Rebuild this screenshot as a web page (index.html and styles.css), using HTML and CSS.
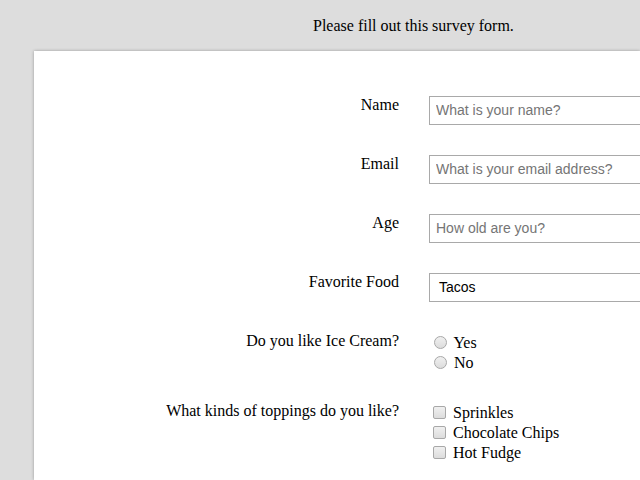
FILE: index.html
```html
<!DOCTYPE html>
<html>
<head>
<meta charset="utf-8">
<link rel="stylesheet" href="styles.css">
</head>
<body>
<header class="intro">Please fill out this survey form.</header>
<main class="panel">
  <form class="survey">
    <div class="row">
      <label class="label" for="name">Name</label>
      <div class="field"><input class="text" id="name" type="text" placeholder="What is your name?"></div>
    </div>
    <div class="row">
      <label class="label" for="email">Email</label>
      <div class="field"><input class="text" id="email" type="text" placeholder="What is your email address?"></div>
    </div>
    <div class="row">
      <label class="label" for="age">Age</label>
      <div class="field"><input class="text" id="age" type="text" placeholder="How old are you?"></div>
    </div>
    <div class="row">
      <label class="label" for="food">Favorite Food</label>
      <div class="field"><div class="select" id="food">Tacos</div></div>
    </div>
    <div class="row">
      <div class="label">Do you like Ice Cream?</div>
      <div class="field choices">
        <label class="choice"><input class="radio" type="radio" name="ice"> Yes</label>
        <label class="choice"><input class="radio" type="radio" name="ice"> No</label>
      </div>
    </div>
    <div class="row">
      <div class="label">What kinds of toppings do you like?</div>
      <div class="field choices">
        <label class="choice"><input class="check" type="checkbox"> Sprinkles</label>
        <label class="choice"><input class="check" type="checkbox"> Chocolate Chips</label>
        <label class="choice"><input class="check" type="checkbox"> Hot Fudge</label>
      </div>
    </div>
  </form>
</main>
</body>
</html>
```

FILE: styles.css
```css
html, body {
  margin: 0;
  padding: 0;
  height: 100%;
  overflow: hidden;
}
body {
  background: #dddddd;
  font-family: "Liberation Serif", "Times New Roman", serif;
  font-size: 16px;
  color: #000;
}
.intro {
  height: 51px;
  box-sizing: border-box;
  padding: 17px 0 0 313px;
  line-height: 18px;
}
.panel {
  margin-left: 34px;
  height: 429px;
  box-sizing: border-box;
  overflow: hidden;
  background: #fff;
  box-shadow: 0 0 3px rgba(0, 0, 0, 0.3);
  padding-top: 45px;
}
.survey {
  display: flex;
  flex-direction: column;
  gap: 30px;
}
.row {
  display: grid;
  grid-template-columns: 365px 1fr;
  column-gap: 30px;
  align-items: start;
}
.label {
  text-align: right;
  line-height: 18px;
}
.field {
  min-width: 0;
}
.text, .select {
  box-sizing: border-box;
  width: 340px;
  height: 29px;
  border: 1px solid #a9a9a9;
  margin: 0;
  padding: 0 6px 1px;
  font-family: "Liberation Sans", Arial, sans-serif;
  font-size: 14px;
  color: #000;
  background: #fff;
  outline: none;
}
.text::placeholder {
  color: #757575;
}
.select {
  display: flex;
  align-items: center;
  padding-left: 9px;
}
.choices {
  display: flex;
  flex-direction: column;
  padding-top: 1px;
  margin-bottom: -1px;
}
.choice {
  line-height: 20px;
  height: 20px;
}
.radio, .check {
  -webkit-appearance: none;
  appearance: none;
  box-sizing: border-box;
  width: 13px;
  height: 13px;
  border: 1px solid #a8a8a8;
  background: linear-gradient(#f0f0f0, #dcdcdc);
  vertical-align: -1px;
}
.radio {
  border-radius: 50%;
  margin: 0 3px 0 5px;
}
.check {
  border-radius: 2px;
  margin: 0 3px 0 4px;
}
```
